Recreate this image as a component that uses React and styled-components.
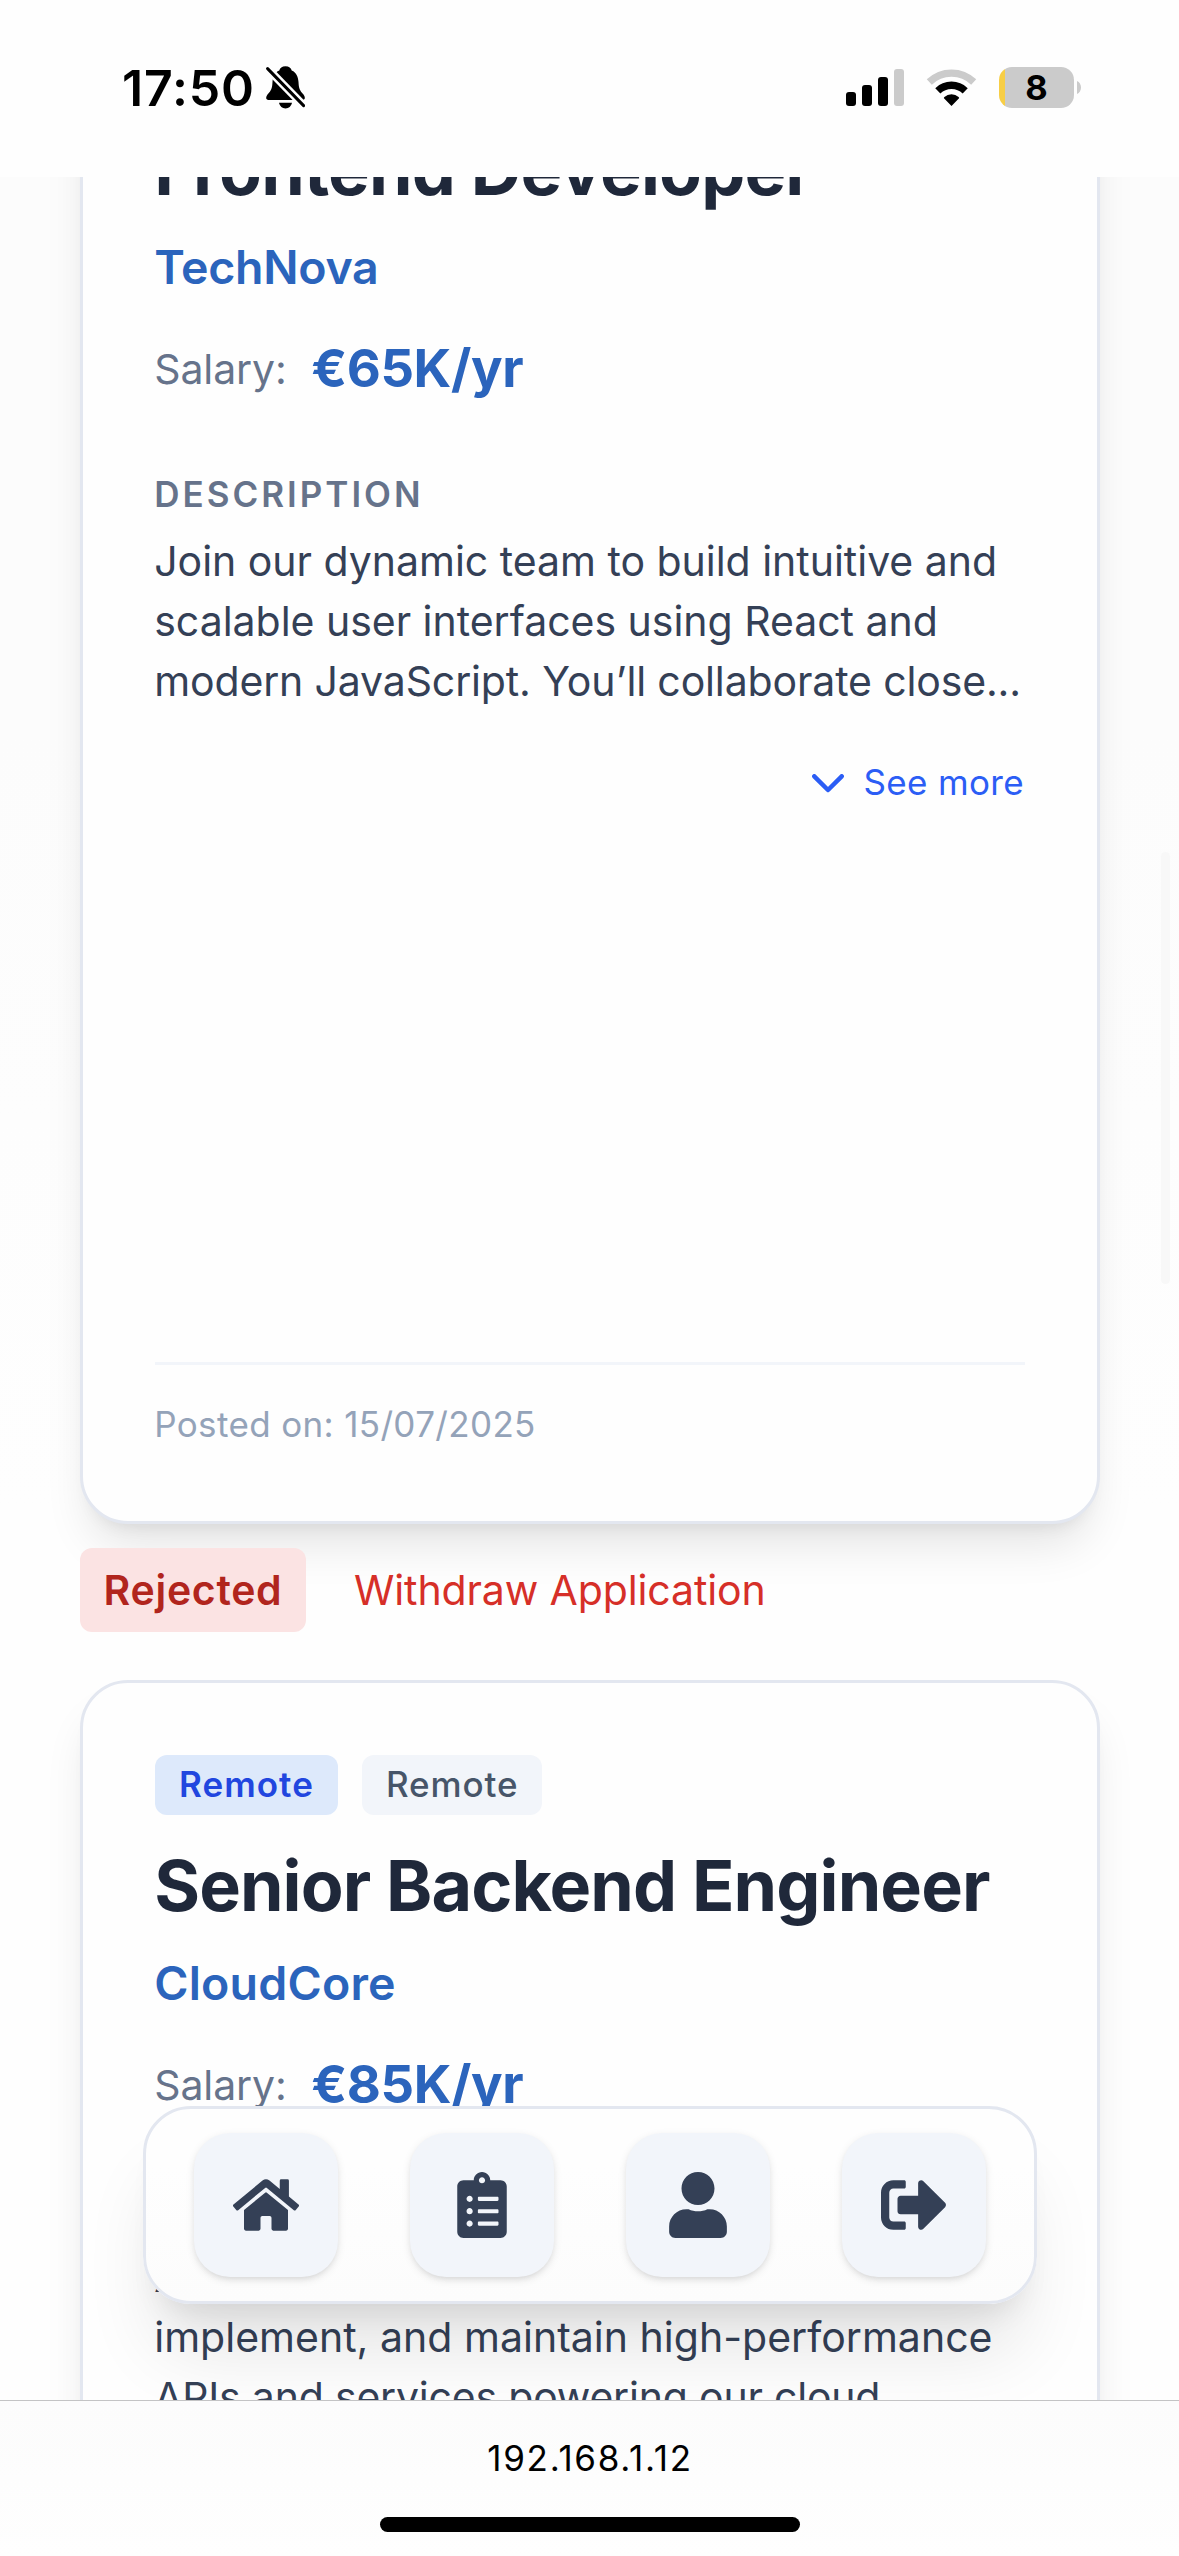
import React from "react";
import styled, { createGlobalStyle } from "styled-components";
import { FaHome, FaClipboardList, FaUser, FaSignOutAlt } from "react-icons/fa";

const GlobalStyle = createGlobalStyle`
  *, *::before, *::after { box-sizing: border-box; }
  body {
    margin: 0;
    background: #fefefe;
    font-family: Inter, "Liberation Sans", sans-serif;
  }
`;

const Screen = styled.div`
  display: flex;
  flex-direction: column;
  width: 1179px;
  height: 2556px;
  overflow: hidden;
`;

/* ---------- Device status bar ---------- */

const StatusBar = styled.header`
  display: flex;
  flex: none;
  align-items: center;
  justify-content: space-between;
  height: 177px;
  padding: 0 98px 2px 122px;
  background: #fefefe;
`;

const StatusGroup = styled.div`
  display: flex;
  align-items: center;
  gap: ${({ $gap }) => $gap}px;
`;

const Clock = styled.span`
  font-size: 50px;
  font-weight: 600;
  line-height: 60px;
  letter-spacing: 0.85px;
  color: #000;
`;

const Glyph = styled.svg`
  display: block;
  flex: none;
`;

const Battery = styled.div`
  display: flex;
  align-items: center;
  gap: 3px;
`;

const BatteryBody = styled.div`
  display: flex;
  align-items: center;
  justify-content: center;
  width: 75px;
  height: 41px;
  border-radius: 13px;
  background: linear-gradient(90deg, #f7ce46 6.4px, #cbcbcb 6.4px);
  font-size: 34.5px;
  font-weight: 700;
  line-height: 41px;
  color: #000;
`;

/* ---------- Scrolling page ---------- */

const Viewport = styled.main`
  position: relative;
  flex: none;
  height: 2223px;
  overflow: hidden;
  background: linear-gradient(#fcfcfc 0%, #fcfcfc 25%, #fefefe 60%);
`;

const JobList = styled.div`
  display: flex;
  flex-direction: column;
  gap: 48px;
  margin-top: -213px;
  padding: 0 79px 0 80px;
`;

const JobEntry = styled.section`
  display: flex;
  flex-direction: column;
  gap: 24px;
`;

const Card = styled.article`
  display: flex;
  flex: none;
  flex-direction: column;
  height: 1560px;
  padding: 72px;
  border: 3px solid #e3e7f0;
  border-radius: 48px;
  background: #fefefe;
  box-shadow: 0 30px 45px -9px rgba(0, 0, 0, 0.1), 0 12px 18px -12px rgba(0, 0, 0, 0.1);
  text-indent: -0.8px;
`;

const Tags = styled.div`
  display: flex;
  gap: 24px;
  min-height: 60px;
`;

const Tag = styled.span`
  height: 60px;
  padding: 0 24px;
  border-radius: 12px;
  background: ${({ $accent }) => ($accent ? "#dde9fb" : "#f2f5fa")};
  color: ${({ $accent }) => ($accent ? "#2146df" : "#475569")};
  font-size: 35px;
  font-weight: ${({ $accent }) => ($accent ? 600 : 500)};
  line-height: 58px;
  letter-spacing: ${({ $accent }) => ($accent ? 1.05 : 0.9)}px;
  text-indent: 0;
`;

const Title = styled.h2`
  margin: 24px 0 0;
  font-size: 70px;
  font-weight: 700;
  line-height: 93px;
  letter-spacing: ${({ $tracking }) => $tracking}px;
  white-space: nowrap;
  color: #1f283a;
`;

const Company = styled.p`
  margin: 18px 0 0;
  font-size: 46.5px;
  font-weight: 600;
  line-height: 66px;
  letter-spacing: ${({ $tracking }) => $tracking}px;
  color: #2b64bc;
`;

const SalaryRow = styled.div`
  display: flex;
  align-items: center;
  gap: 24.5px;
  margin-top: 26px;
`;

const SalaryLabel = styled.span`
  padding-top: 2px;
  font-size: 41px;
  line-height: 60px;
  letter-spacing: -0.1px;
  color: #66738b;
`;

const SalaryValue = styled.span`
  font-size: 52.5px;
  font-weight: 700;
  line-height: 84px;
  letter-spacing: -0.4px;
  color: #2b64bc;
  text-indent: 0;
`;

const SectionLabel = styled.h3`
  margin: 60px 0 0;
  font-size: 35px;
  font-weight: 600;
  line-height: 48px;
  letter-spacing: 3px;
  text-transform: uppercase;
  color: #66738b;
`;

const Description = styled.div`
  margin: 13px 0 0;
  font-size: 41px;
  line-height: 60px;
  color: #344056;
`;

const Line = styled.p`
  margin: 0;
  letter-spacing: ${({ $tracking = -0.02 }) => $tracking}px;
  white-space: nowrap;
`;

const SeeMore = styled.button`
  display: flex;
  align-items: center;
  align-self: flex-end;
  gap: 19px;
  margin: 47px 0 0;
  padding: 0 1px 0 0;
  border: 0;
  background: none;
  font: 400 35px/48px Inter, "Liberation Sans", sans-serif;
  letter-spacing: 0.35px;
  color: #2b5df5;

  svg { margin-top: 3px; }
`;

const CardFooter = styled.footer`
  margin-top: auto;
  padding: 35px 0 1px;
  border-top: 3px solid #f2f5fa;
  font-size: 35px;
  line-height: 48px;
  letter-spacing: 0.36px;
  color: #94a3b9;
`;

const ApplicationRow = styled.div`
  display: flex;
  align-items: center;
  gap: 48px;
  height: 84px;
  font-size: 41px;
  line-height: 84px;
`;

const StatusBadge = styled.span`
  width: 226px;
  border-radius: 12px;
  background: #fbe3e3;
  color: #b1251d;
  font-weight: 600;
  letter-spacing: 0.7px;
  text-align: center;
`;

const WithdrawButton = styled.button`
  padding: 0;
  border: 0;
  background: none;
  font: inherit;
  letter-spacing: -0.12px;
  color: #d62f28;
`;

const ScrollThumb = styled.div`
  position: absolute;
  top: 675px;
  right: 9px;
  width: 9px;
  height: 432px;
  border-radius: 5px;
  background: #f8f8f8;
`;

/* ---------- Floating navigation ---------- */

const FloatingNav = styled.nav`
  position: absolute;
  bottom: 96px;
  left: 143px;
  display: flex;
  gap: 72px;
  padding: 24px 48px;
  border: 3px solid #e3e7f0;
  border-radius: 48px;
  background: linear-gradient(#fefefe 30%, #fcfcfc);
  box-shadow: 0 60px 75px -15px rgba(0, 0, 0, 0.1), 0 24px 30px -18px rgba(0, 0, 0, 0.1);
`;

const NavButton = styled.button`
  display: flex;
  align-items: center;
  justify-content: center;
  width: 144px;
  height: 144px;
  padding: 0;
  border: 0;
  border-radius: 36px;
  background: #f2f5fa;
  box-shadow: 0 3px 9px rgba(0, 0, 0, 0.1), 0 3px 6px -3px rgba(0, 0, 0, 0.1);
  font-size: 66px;
  color: #344056;
`;

/* ---------- Browser bar ---------- */

const BrowserBar = styled.footer`
  display: flex;
  flex: none;
  flex-direction: column;
  align-items: center;
  justify-content: space-between;
  height: 156px;
  padding: 33px 0 24px;
  border-top: 1px solid #c3c3c4;
  background: linear-gradient(#fcfcfc, #fefefe);
`;

const Address = styled.span`
  padding-left: 1px;
  font-size: 35px;
  line-height: 48px;
  letter-spacing: 1.7px;
  color: #000;
`;

const HomeIndicator = styled.div`
  width: 420px;
  height: 15px;
  border-radius: 8px;
  background: #000;
`;

function BellOff() {
  return (
    <Glyph width="39" height="43" viewBox="0 0 39 43">
      <path d="M19.5.3c-3.5 0-5.6 1.8-6.2 4.2C8.5 6.5 6.8 11 6.5 16c-.3 6-1 8.5-5 12.5C-.5 31-.3 34 2.5 34h34c2.8 0 3-3 1-5.5-4-4-4.7-6.5-5-12.5-.3-5-2-9.500-6.800-11.500C25.100 2.100 23 .3 19.500.3z" />
      <path d="M13 36.800h13c-.8 3.500-3.200 5.700-6.500 5.700s-5.700-2.200-6.500-5.700z" />
      <path d="M-1-.1 40 42" stroke="#fefefe" strokeWidth="8" />
      <path d="m1.600 2.600 36 37" stroke="#000" strokeWidth="3" strokeLinecap="round" />
    </Glyph>
  );
}

function CellularBars() {
  return (
    <Glyph width="58" height="37" viewBox="0 0 58 37">
      <rect x="0" y="23" width="10" height="14" rx="3" />
      <rect x="16" y="16" width="10" height="21" rx="3" />
      <rect x="32" y="8" width="10" height="29" rx="3" />
      <rect x="48" y="0" width="10" height="37" rx="3" fill="#cbcbcb" />
    </Glyph>
  );
}

function WifiIcon() {
  return (
    <Glyph width="51" height="37" viewBox="-.5 0 51 37">
      <path d="M2.800 13a32 32 0 0 1 44.400 0" fill="none" stroke="#cbcbcb" strokeWidth="7.300" />
      <path d="M11.300 21.800a19.700 19.700 0 0 1 27.400 0" fill="none" stroke="#000" strokeWidth="7.300" />
      <path d="M25 37l-7.300-7.400c-.5-.6-.4-1.200.2-1.700a10.800 10.800 0 0 1 14.200 0c.6.5.7 1.100.2 1.700z" />
    </Glyph>
  );
}

function ChevronDown() {
  return (
    <Glyph width="32" height="19" viewBox="0 0 32 19">
      <path
        d="M2.300 2.300 16 16 29.700 2.300"
        fill="none"
        stroke="currentColor"
        strokeWidth="4.500"
        strokeLinecap="round"
        strokeLinejoin="round"
      />
    </Glyph>
  );
}

const jobs = [
  {
    tags: [],
    title: "Frontend Developer",
    titleTracking: -0.82,
    company: "TechNova",
    companyTracking: -0.27,
    salary: "€65K/yr",
    lines: [
      { text: "Join our dynamic team to build intuitive and" },
      { text: "scalable user interfaces using React and" },
      { text: "modern JavaScript. You’ll collaborate close...", tracking: -0.14 },
    ],
    status: "Rejected",
  },
  {
    tags: ["Remote", "Remote"],
    title: "Senior Backend Engineer",
    titleTracking: -0.9,
    company: "CloudCore",
    companyTracking: 0.2,
    salary: "€85K/yr",
    lines: [
      { text: "As a backend engineer you will design," },
      { text: "implement, and maintain high-performance", tracking: 0.02 },
      { text: "APIs and services powering our cloud", tracking: -0.2 },
    ],
  },
];

const navItems = [
  { label: "Home", Icon: FaHome },
  { label: "Applications", Icon: FaClipboardList },
  { label: "Profile", Icon: FaUser },
  { label: "Log out", Icon: FaSignOutAlt },
];

function JobCard({ job }) {
  return (
    <Card>
      <Tags>
        {job.tags.map((tag, index) => (
          <Tag key={index} $accent={index === 0}>
            {tag}
          </Tag>
        ))}
      </Tags>
      <Title $tracking={job.titleTracking}>{job.title}</Title>
      <Company $tracking={job.companyTracking}>{job.company}</Company>
      <SalaryRow>
        <SalaryLabel>Salary:</SalaryLabel>
        <SalaryValue>{job.salary}</SalaryValue>
      </SalaryRow>
      <SectionLabel>Description</SectionLabel>
      <Description>
        {job.lines.map((line) => (
          <Line key={line.text} $tracking={line.tracking}>
            {line.text}
          </Line>
        ))}
      </Description>
      <SeeMore>
        <ChevronDown />
        See more
      </SeeMore>
      <CardFooter>Posted on: 15/07/2025</CardFooter>
    </Card>
  );
}

export default function App() {
  return (
    <Screen>
      <GlobalStyle />
      <StatusBar>
        <StatusGroup $gap={11}>
          <Clock>17:50</Clock>
          <BellOff />
        </StatusGroup>
        <StatusGroup $gap={22}>
          <CellularBars />
          <WifiIcon />
          <Battery>
            <BatteryBody>8</BatteryBody>
            <Glyph width="4" height="13" viewBox="0 0 4 13">
              <path d="M0 0c2.500 1.200 4 3.600 4 6.500S2.500 11.800 0 13z" fill="#cbcbcb" />
            </Glyph>
          </Battery>
        </StatusGroup>
      </StatusBar>

      <Viewport>
        <JobList>
          {jobs.map((job) => (
            <JobEntry key={job.title}>
              <JobCard job={job} />
              {job.status && (
                <ApplicationRow>
                  <StatusBadge>{job.status}</StatusBadge>
                  <WithdrawButton>Withdraw Application</WithdrawButton>
                </ApplicationRow>
              )}
            </JobEntry>
          ))}
        </JobList>
        <ScrollThumb />
        <FloatingNav>
          {navItems.map(({ label, Icon }) => (
            <NavButton key={label} aria-label={label}>
              <Icon />
            </NavButton>
          ))}
        </FloatingNav>
      </Viewport>

      <BrowserBar>
        <Address>192.168.1.12</Address>
        <HomeIndicator />
      </BrowserBar>
    </Screen>
  );
}
